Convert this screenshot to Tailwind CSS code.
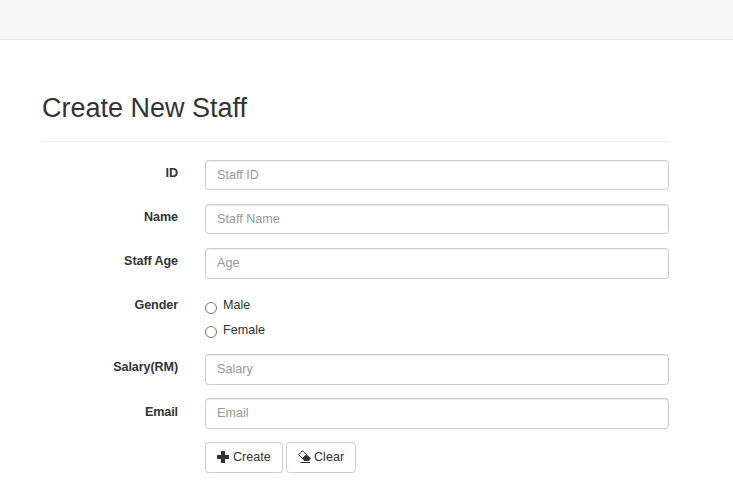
<!DOCTYPE html>
<html lang="en">
<head>
<meta charset="utf-8">
<title>Create New Staff</title>
<script src="https://cdn.jsdelivr.net/npm/@tailwindcss/browser@4"></script>
</head>
<body class="bg-white font-['Liberation_Sans',Arial,sans-serif] text-[12.6px] leading-[18px] text-[#333] h-[504px] overflow-hidden">
<nav class="h-10 bg-[#f8f8f8] border-b border-[#e7e7e7]"></nav>
<main class="ml-[42px] w-[627px] pt-[53px]">
  <header class="h-[49px] border-b border-[#eee]">
    <h1 class="text-[27px] leading-[30px]">Create New Staff</h1>
  </header>
  <form class="pt-[18px]">
    <div class="flex h-11">
      <label for="id" class="w-[136px] mr-[27px] pt-1 text-right font-bold tracking-[-0.1px]">ID</label>
      <input id="id" placeholder="Staff ID" class="w-[464px] h-[30px] rounded-[3.6px] border border-[#ccc] px-[11px] pb-px shadow-[inset_0_1px_1px_rgba(0,0,0,0.075)] placeholder:text-[#999]">
    </div>
    <div class="flex h-11">
      <label for="name" class="w-[136px] mr-[27px] pt-1 text-right font-bold tracking-[-0.1px]">Name</label>
      <input id="name" placeholder="Staff Name" class="w-[464px] h-[30px] rounded-[3.6px] border border-[#ccc] px-[11px] pb-px shadow-[inset_0_1px_1px_rgba(0,0,0,0.075)] placeholder:text-[#999]">
    </div>
    <div class="flex h-11">
      <label for="age" class="w-[136px] mr-[27px] pt-1 text-right font-bold tracking-[-0.1px]">Staff Age</label>
      <input id="age" placeholder="Age" class="w-[464px] h-[31px] rounded-[3.6px] border border-[#ccc] px-[11px] pb-px shadow-[inset_0_1px_1px_rgba(0,0,0,0.075)] placeholder:text-[#999]">
    </div>
    <div class="flex h-[62px]">
      <span class="w-[136px] mr-[27px] pt-1 text-right font-bold tracking-[-0.1px]">Gender</span>
      <div class="pt-1">
        <label class="flex h-[25px] gap-1.5"><input type="radio" name="gender" class="mt-[6px] size-3 appearance-none rounded-full border border-[#767676] checked:border-4">Male</label>
        <label class="flex h-[25px] gap-1.5"><input type="radio" name="gender" class="mt-[5px] size-3 appearance-none rounded-full border border-[#767676] checked:border-4">Female</label>
      </div>
    </div>
    <div class="flex h-11">
      <label for="salary" class="w-[136px] mr-[27px] pt-1 text-right font-bold tracking-[-0.1px]">Salary(RM)</label>
      <input id="salary" placeholder="Salary" class="w-[464px] h-[31px] rounded-[3.6px] border border-[#ccc] px-[11px] pb-px shadow-[inset_0_1px_1px_rgba(0,0,0,0.075)] placeholder:text-[#999]">
    </div>
    <div class="flex h-11">
      <label for="email" class="w-[136px] mr-[27px] pt-[5px] text-right font-bold tracking-[-0.1px]">Email</label>
      <input id="email" placeholder="Email" class="w-[464px] h-[31px] rounded-[3.6px] border border-[#ccc] px-[11px] pb-px shadow-[inset_0_1px_1px_rgba(0,0,0,0.075)] placeholder:text-[#999]">
    </div>
    <div class="ml-[163px] flex gap-[3px]">
      <button type="button" class="flex w-[78px] h-[31px] items-center rounded-[3.6px] border border-[#ccc] bg-white pl-[11px] pb-px gap-1">
        <svg class="w-3 h-3 mb-px shrink-0" viewBox="0 0 12 12" fill="#333"><path d="M4.500 0h3q.5 0 .5.5V4h3.500q.5 0 .5.5v3q0 .5-.5.5H8v3.500q0 .5-.5.5h-3q-.5 0-.5-.5V8H.5Q0 8 0 7.500v-3Q0 4 .5 4H4V.5Q4 0 4.500 0z"/></svg>
        Create
      </button>
      <button type="reset" class="flex w-[70px] h-[31px] items-center rounded-[3.6px] border border-[#ccc] bg-white pl-[11px] pb-px gap-[3px]">
        <svg class="w-[13px] h-[13px] mb-0.5 shrink-0" viewBox="0 0 13 13" fill="#333"><path d="M4.500.7 8.500 4.700 4.500 8.500.7 4.700z" fill="none" stroke="#333" stroke-width="1" stroke-linejoin="round"/><path d="M8.500 4.400 12.700 8.100v.8l-2 2H6.500L4.200 8.500z"/><path d="M2.500 12h9.500v1H2.500z"/></svg>
        Clear
      </button>
    </div>
  </form>
</main>
</body>
</html>
